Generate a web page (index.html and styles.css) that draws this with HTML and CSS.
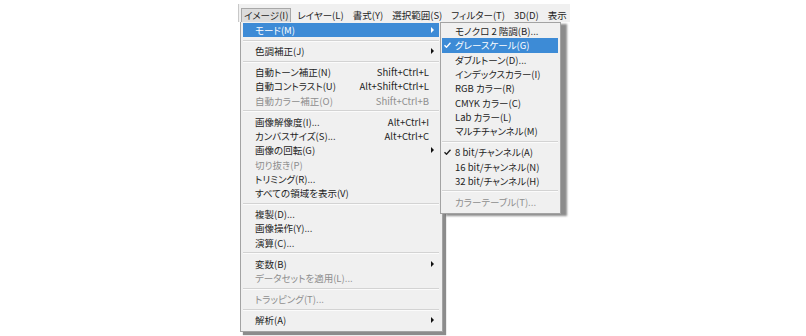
FILE: index.html
```html
<!DOCTYPE html>
<html lang="ja">
<head>
  <meta charset="UTF-8">
  <title>イメージ メニュー</title>
  <link rel="stylesheet" href="styles.css">
</head>
<body>
  <div class="desk">
    <div class="menubar">
      <span class="mb-item active">イメージ(I)</span>
      <span class="mb-item">レイヤー(L)</span>
      <span class="mb-item">書式(Y)</span>
      <span class="mb-item">選択範囲(S)</span>
      <span class="mb-item">フィルター(T)</span>
      <span class="mb-item">3D(D)</span>
      <span class="mb-item">表示</span>
    </div>

    <div class="menu main-menu">
      <div class="item hl"><span>モード(M)</span><span class="arrow"></span></div>
      <div class="sep"></div>
      <div class="item"><span>色調補正(J)</span><span class="arrow"></span></div>
      <div class="sep"></div>
      <div class="item"><span>自動トーン補正(N)</span><span class="key">Shift+Ctrl+L</span></div>
      <div class="item"><span>自動コントラスト(U)</span><span class="key">Alt+Shift+Ctrl+L</span></div>
      <div class="item off"><span>自動カラー補正(O)</span><span class="key">Shift+Ctrl+B</span></div>
      <div class="sep"></div>
      <div class="item"><span>画像解像度(I)...</span><span class="key">Alt+Ctrl+I</span></div>
      <div class="item"><span>カンバスサイズ(S)...</span><span class="key">Alt+Ctrl+C</span></div>
      <div class="item"><span>画像の回転(G)</span><span class="arrow"></span></div>
      <div class="item off"><span>切り抜き(P)</span></div>
      <div class="item"><span>トリミング(R)...</span></div>
      <div class="item"><span>すべての領域を表示(V)</span></div>
      <div class="sep"></div>
      <div class="item"><span>複製(D)...</span></div>
      <div class="item"><span>画像操作(Y)...</span></div>
      <div class="item"><span>演算(C)...</span></div>
      <div class="sep"></div>
      <div class="item"><span>変数(B)</span><span class="arrow"></span></div>
      <div class="item off"><span>データセットを適用(L)...</span></div>
      <div class="sep"></div>
      <div class="item off"><span>トラッピング(T)...</span></div>
      <div class="sep"></div>
      <div class="item"><span>解析(A)</span><span class="arrow"></span></div>
    </div>

    <div class="menu sub-menu">
      <div class="item"><span class="check"></span><span>モノクロ 2 階調(B)...</span></div>
      <div class="item hl"><span class="check"><svg width="7" height="6" viewBox="0 0 7 6"><path d="M0.5 3.2 L2.5 5.2 L6.5 0.8" fill="none" stroke="currentColor" stroke-width="1.4"/></svg></span><span>グレースケール(G)</span></div>
      <div class="item"><span class="check"></span><span>ダブルトーン(D)...</span></div>
      <div class="item"><span class="check"></span><span>インデックスカラー(I)</span></div>
      <div class="item"><span class="check"></span><span>RGB カラー(R)</span></div>
      <div class="item"><span class="check"></span><span>CMYK カラー(C)</span></div>
      <div class="item"><span class="check"></span><span>Lab カラー(L)</span></div>
      <div class="item"><span class="check"></span><span>マルチチャンネル(M)</span></div>
      <div class="sep"></div>
      <div class="item"><span class="check"><svg width="7" height="6" viewBox="0 0 7 6"><path d="M0.5 3.2 L2.5 5.2 L6.5 0.8" fill="none" stroke="currentColor" stroke-width="1.4"/></svg></span><span>8 bit/チャンネル(A)</span></div>
      <div class="item"><span class="check"></span><span>16 bit/チャンネル(N)</span></div>
      <div class="item"><span class="check"></span><span>32 bit/チャンネル(H)</span></div>
      <div class="sep"></div>
      <div class="item off"><span class="check"></span><span>カラーテーブル(T)...</span></div>
    </div>
  </div>
</body>
</html>
```

FILE: styles.css
```css
body {
  margin: 0;
  background: #ffffff;
  font-family: "Noto Sans CJK JP", "Noto Sans", sans-serif;
  font-size: 9.5px;
  font-feature-settings: "palt";
  color: #1e1e1e;
}

.desk {
  position: relative;
  width: 332px;
  height: 332px;
  margin-left: 238px;
  padding-top: 4px;
}

.menubar {
  height: 18px;
  background: #f0f0f0;
  border-left: 1px solid #c8c8c8;
  display: flex;
  align-items: flex-end;
  padding-left: 2px;
  white-space: nowrap;
  overflow: hidden;
}

.mb-item {
  height: 13px;
  line-height: 13px;
  padding: 0 2px;
  margin-right: 3px;
  border: 1px solid transparent;
  border-bottom: none;
}

.mb-item.active {
  background: #dcdcdc;
  border-color: #a8a8a8;
}

.menu {
  position: absolute;
  top: 22px;
  background: #f0f0f0;
  border: 1px solid #a3a3a3;
  box-sizing: border-box;
}

.main-menu {
  left: 2px;
  width: 203px;
  padding: 1px 3px 4px 2px;
  border-top: none;
  box-shadow: 3px 3px 1px rgba(0, 0, 0, 0.45);
}

.sub-menu {
  left: 202px;
  width: 121px;
  padding: 1px 2px 4px 1px;
  box-shadow: 6px 2px 2px rgba(0, 0, 0, 0.45);
}

.item {
  height: 14.3px;
  display: flex;
  align-items: center;
  padding: 0 10px 0 12px;
  white-space: nowrap;
}

.sub-menu .item {
  padding-left: 2px;
}

.item.hl {
  background: #3d8bd6;
  color: #ffffff;
}

.item.off {
  color: #8e8e8e;
}

.key {
  margin-left: auto;
}

.arrow {
  margin-left: auto;
  margin-right: -5px;
  width: 0;
  height: 0;
  border-top: 3px solid transparent;
  border-bottom: 3px solid transparent;
  border-left: 3px solid #111111;
}

.hl .arrow {
  border-left-color: #ffffff;
}

.check {
  width: 11px;
  display: flex;
  align-items: center;
  color: #1e1e1e;
}

.hl .check {
  color: #ffffff;
}

.sep {
  height: 6.7px;
  display: flex;
  align-items: center;
}

.sep::before {
  content: "";
  flex: 1;
  height: 1px;
  background: #d3d3d3;
  border-bottom: 1px solid #fbfbfb;
}
```
